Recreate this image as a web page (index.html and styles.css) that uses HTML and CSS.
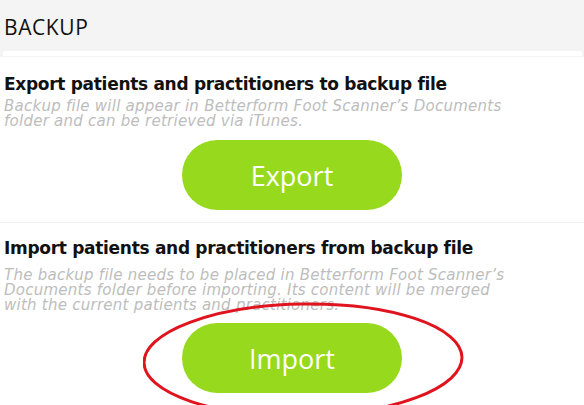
FILE: index.html
```html
<!DOCTYPE html>
<html>
<head>
<meta charset="utf-8">
<link rel="stylesheet" href="styles.css">
</head>
<body>
<div class="page">
  <div class="header">
    <div class="header-title">BACKUP</div>
    <div class="header-strip"></div>
  </div>
  <section class="section">
    <h2 class="title">Export patients and practitioners to backup file</h2>
    <p class="desc">Backup file will appear in Betterform Foot Scanner’s Documents<br>folder and can be retrieved via iTunes.</p>
    <div class="btn-row"><button class="btn">Export</button></div>
  </section>
  <section class="section second">
    <h2 class="title">Import patients and practitioners from backup file</h2>
    <p class="desc">The backup file needs to be placed in Betterform Foot Scanner’s<br>Documents folder before importing. Its content will be merged<br>with the current patients and practitioners.</p>
    <div class="btn-row"><button class="btn">Import</button></div>
  </section>
  <svg class="annotation" width="340" height="130" viewBox="0 0 340 130">
    <ellipse cx="160" cy="58" rx="159" ry="56" fill="none" stroke="#e0141e" stroke-width="3" transform="rotate(-1 160 58)"/>
  </svg>
</div>
</body>
</html>
```
FILE: styles.css
```css
html, body {
  margin: 0;
  padding: 0;
  background: #ffffff;
}
.page {
  position: relative;
  width: 584px;
  height: 405px;
  overflow: hidden;
  font-family: "DejaVu Sans", "Open Sans", sans-serif;
}
.header {
  background: #f4f4f4;
  height: 57px;
  display: flex;
  flex-direction: column;
}
.header-title {
  height: 51px;
  padding-left: 4px;
  box-sizing: border-box;
  padding-top: 13px;
  font-family: "Open Sans", sans-serif;
  font-size: 21px;
  line-height: 28px;
  color: #111;
  letter-spacing: 0.6px;
}
.header-strip {
  height: 5px;
  margin: 0 2px 0 3px;
  background: #ffffff;
}
.section {
  padding: 16px 4px 0 4px;
  height: 166px;
  box-sizing: border-box;
  border-bottom: 1px solid #efefef;
  white-space: nowrap;
}
.second {
  border-bottom: none;
  padding-top: 14px;
  height: auto;
}
.title {
  margin: 0;
  font-size: 17px;
  font-weight: 700;
  line-height: 22px;
  color: #111;
  letter-spacing: -0.3px;
}
.desc {
  margin: 4px 0 0 0;
  font-size: 15px;
  font-style: italic;
  line-height: 15px;
  color: #bdbdbd;
  letter-spacing: 0.25px;
}
.second .desc {
  margin-top: 9px;
}
.btn-row {
  display: flex;
  justify-content: center;
  margin-top: 11px;
}
.second .btn-row {
  margin-top: 10px;
}
.btn {
  width: 220px;
  height: 70px;
  border: none;
  border-radius: 35px;
  background: #97d91d;
  color: #ffffff;
  font-family: "Open Sans", sans-serif;
  font-size: 27px;
  padding: 0;
}
.annotation {
  position: absolute;
  left: 143px;
  top: 302px;
}
```
